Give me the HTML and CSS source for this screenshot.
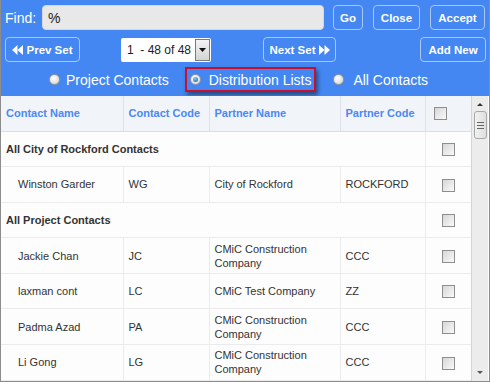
FILE: index.html
```html
<!DOCTYPE html>
<html>
  <head>
    <link rel="stylesheet" href="styles.css">
  </head>
  <body>
    <div class="lookup">
      <div class="toolbar">
        <div class="bar find-bar">
          <label class="find-label" for="find">Find:</label>
          <input type="text" id="find" class="find-input" value="%">
          <button class="btn btn-go">Go</button>
          <button class="btn btn-close">Close</button>
          <button class="btn btn-accept">Accept</button>
        </div>
        <div class="bar nav-bar">
          <button class="btn btn-prev">
            <svg width="11" height="10" viewBox="0 0 11 10"><path d="M0 5L5.5 0v10z M5.5 5L11 0v10z" fill="#fff"/></svg>
            Prev Set
          </button>
          <div class="set-select">
            <span class="set-text">1&nbsp; - 48 of 48</span>
            <span class="set-arrow"><svg width="7" height="4" viewBox="0 0 7 4"><path d="M0 0h7L3.5 4z" fill="#111"/></svg></span>
          </div>
          <button class="btn btn-next">
            Next Set
            <svg width="11" height="10" viewBox="0 0 11 10"><path d="M0 0l5.5 5L0 10z M5.5 0L11 5l-5.5 5z" fill="#fff"/></svg>
          </button>
          <button class="btn btn-add">Add New</button>
        </div>
        <div class="bar mode-bar">
          <label class="mode mode-project"><span class="radio"></span>Project Contacts</label>
          <label class="mode mode-dist"><span class="radio checked"></span>Distribution Lists</label>
          <label class="mode mode-all"><span class="radio"></span>All Contacts</label>
        </div>
      </div>
      <div class="grid-wrap">
        <div class="grid-area">
          <table class="grid">
            <colgroup>
              <col style="width:122px"><col style="width:86px"><col style="width:131px"><col style="width:85px"><col style="width:46px">
            </colgroup>
            <thead>
              <tr>
                <th>Contact Name</th>
                <th>Contact Code</th>
                <th>Partner Name</th>
                <th>Partner Code</th>
                <th class="chk-head"><span class="chk"></span></th>
              </tr>
            </thead>
            <tbody>
              <tr class="group">
                <td colspan="4">All City of Rockford Contacts</td>
                <td class="chk-cell"><span class="chk"></span></td>
              </tr>
              <tr>
                <td class="name">Winston Garder</td>
                <td>WG</td>
                <td>City of Rockford</td>
                <td>ROCKFORD</td>
                <td class="chk-cell"><span class="chk"></span></td>
              </tr>
              <tr class="group">
                <td colspan="4">All Project Contacts</td>
                <td class="chk-cell"><span class="chk"></span></td>
              </tr>
              <tr>
                <td class="name">Jackie Chan</td>
                <td>JC</td>
                <td>CMiC Construction Company</td>
                <td>CCC</td>
                <td class="chk-cell"><span class="chk"></span></td>
              </tr>
              <tr>
                <td class="name">laxman cont</td>
                <td>LC</td>
                <td>CMiC Test Company</td>
                <td>ZZ</td>
                <td class="chk-cell"><span class="chk"></span></td>
              </tr>
              <tr>
                <td class="name">Padma Azad</td>
                <td>PA</td>
                <td>CMiC Construction Company</td>
                <td>CCC</td>
                <td class="chk-cell"><span class="chk"></span></td>
              </tr>
              <tr>
                <td class="name">Li Gong</td>
                <td>LG</td>
                <td>CMiC Construction Company</td>
                <td>CCC</td>
                <td class="chk-cell"><span class="chk"></span></td>
              </tr>
            </tbody>
          </table>
        </div>
        <div class="scrollbar">
          <span class="arrow-up"></span>
          <span class="thumb"><i></i><i></i><i></i></span>
          <span class="arrow-down"></span>
        </div>
      </div>
    </div>
  </body>
</html>
```

FILE: styles.css
```css
/* contact lookup */
html, body {
  margin: 0;
  padding: 0;
}
body {
  font-family: "Liberation Sans", Arial, sans-serif;
  background-color: #fff;
}
.lookup {
  width: 490px;
  height: 382px;
  box-sizing: border-box;
  border: 1px solid #8c8c8c;
  border-top: none;
  display: flex;
  flex-direction: column;
  overflow: hidden;
}
.toolbar {
  background-color: #4487f2;
  padding: 5px 3px 4px 4px;
}
.bar {
  display: flex;
  align-items: center;
  height: 25px;
}
.find-bar {
  margin-bottom: 7px;
}
.find-label {
  width: 37px;
  color: #fff;
  font-size: 14px;
}
.find-input {
  width: 282px;
  height: 25px;
  box-sizing: border-box;
  border: 1px solid #d8d8d8;
  border-radius: 4px;
  background-color: #e8e8e8;
  font-family: "Liberation Sans", Arial, sans-serif;
  font-size: 14px;
  color: #222;
  padding: 0 5px;
  outline: none;
}
.btn {
  height: 25px;
  box-sizing: border-box;
  border: 1px solid #a9c8f7;
  border-radius: 4px;
  background-color: #4487f2;
  color: #fff;
  font-family: "Liberation Sans", Arial, sans-serif;
  font-size: 11.5px;
  font-weight: bold;
  padding: 0;
  display: flex;
  align-items: center;
  justify-content: center;
  gap: 3px;
}
.btn-go {
  width: 30px;
  margin-left: 9px;
}
.btn-close {
  width: 47px;
  margin-left: 10px;
}
.btn-accept {
  width: 55px;
  margin-left: 10px;
}
.btn-prev {
  width: 75px;
}
.btn-next {
  width: 73px;
  margin-left: 52px;
}
.btn-add {
  width: 66px;
  margin-left: auto;
}
.set-select {
  width: 90px;
  height: 24px;
  margin-left: 41px;
  margin-top: 1px;
  box-sizing: border-box;
  background-color: #fff;
  border-radius: 2px;
  display: flex;
  align-items: center;
  font-size: 12px;
  color: #222;
}
.set-text {
  flex: 1;
  padding-left: 6px;
}
.set-arrow {
  width: 15px;
  height: 22px;
  margin-right: 1px;
  box-sizing: border-box;
  border: 1px solid #7a7a7a;
  background: linear-gradient(#f4f4f4, #d4d4d4);
  display: flex;
  align-items: center;
  justify-content: center;
}
.mode-bar {
  margin-top: 5px;
}
.mode {
  display: flex;
  align-items: center;
  color: #fff;
  font-size: 14px;
  height: 25px;
  box-sizing: border-box;
}
.radio {
  width: 11px;
  height: 11px;
  box-sizing: border-box;
  border-radius: 50%;
  border: 1px solid #9a9a9a;
  background: radial-gradient(circle at 40% 35%, #fff, #cfcfcf);
  position: relative;
}
.radio.checked::after {
  content: "";
  position: absolute;
  left: 2px;
  top: 2px;
  width: 5px;
  height: 5px;
  border-radius: 50%;
  background: radial-gradient(circle at 40% 35%, #7fd0ff, #0d5a9a);
}
.mode-project {
  margin-left: 44px;
}
.mode-project .radio {
  margin-right: 6px;
}
.mode-dist {
  margin-left: 16px;
  border: 2px solid #c8102e;
  padding: 0 3px;
  box-shadow: 2px 3px 4px rgba(0, 0, 0, 0.45);
}
.mode-dist .radio {
  margin-right: 8px;
}
.mode-all {
  margin-left: 17px;
}
.mode-all .radio {
  margin-right: 9px;
}
.grid-wrap {
  flex: 1;
  display: flex;
  overflow: hidden;
}
.grid-area {
  width: 470px;
  overflow: hidden;
  background-color: #fdfdfd;
}
.grid {
  width: 470px;
  table-layout: fixed;
  border-collapse: collapse;
  font-size: 11px;
  color: #333;
}
.grid th {
  height: 35px;
  box-sizing: border-box;
  background-color: #f1f4f9;
  color: #4a89f3;
  font-weight: bold;
  text-align: left;
  padding: 0 5px;
  border-right: 1px solid #dde2ea;
  border-bottom: 1px solid #d6dde8;
}
.grid td {
  height: 35.6px;
  box-sizing: border-box;
  padding: 0 5px;
  line-height: 14px;
  border-right: 1px solid #ebebeb;
  border-bottom: 1px solid #ebebeb;
}
.grid th:last-child, .grid td:last-child {
  border-right: none;
}
.grid .group td {
  font-weight: bold;
  font-size: 11px;
}
.grid td.name {
  padding-left: 17px;
}
.chk {
  display: inline-block;
  width: 13px;
  height: 13px;
  box-sizing: border-box;
  border: 1px solid #8e8e8e;
  background: linear-gradient(135deg, #d6d6d6, #fafafa);
  vertical-align: middle;
}
.chk-head {
  padding-left: 8px !important;
}
.grid td.chk-cell {
  text-align: center;
  padding: 0 0 0 1px;
}
.scrollbar {
  width: 17px;
  box-sizing: border-box;
  border-left: 1px solid #d4d4d4;
  background-color: #ececec;
  display: flex;
  flex-direction: column;
  align-items: center;
}
.arrow-up, .arrow-down {
  width: 0;
  height: 0;
  border-left: 3px solid transparent;
  border-right: 3px solid transparent;
}
.arrow-up {
  border-bottom: 3px solid #333;
  margin-top: 7px;
}
.arrow-down {
  border-top: 3px solid #555;
  margin-top: auto;
  margin-bottom: 7px;
}
.thumb {
  width: 13px;
  height: 28px;
  margin-top: 5px;
  box-sizing: border-box;
  border: 1px solid #a8a8a8;
  border-radius: 3px;
  background: linear-gradient(90deg, #f2f2f2, #dedede);
  display: flex;
  flex-direction: column;
  align-items: center;
  justify-content: center;
  gap: 2px;
}
.thumb i {
  width: 7px;
  height: 1px;
  background-color: #666;
}
```
